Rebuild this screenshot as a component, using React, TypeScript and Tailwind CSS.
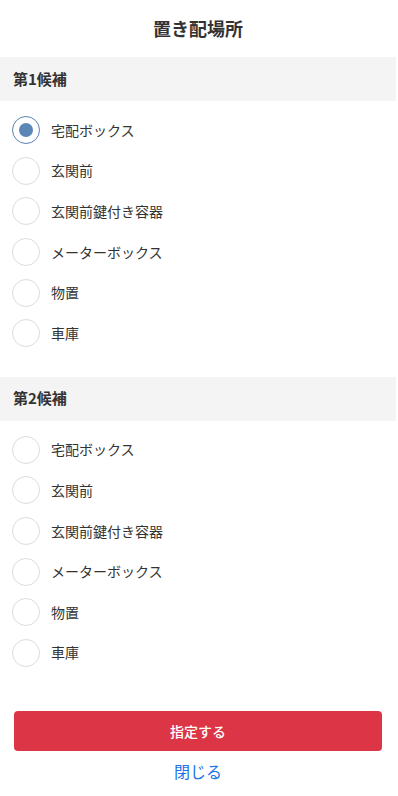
import { useState } from "react";

const places = ["宅配ボックス", "玄関前", "玄関前鍵付き容器", "メーターボックス", "物置", "車庫"];

function Radio({ checked }: { checked: boolean }) {
  return (
    <span className={`size-[28px] shrink-0 rounded-full border grid place-items-center bg-white ${checked ? "border-[#5b84b3]" : "border-[#dcdcdc]"}`}>
      {checked && <span className="size-[14px] rounded-full bg-[#5b87b6]" />}
    </span>
  );
}

function Section({ title, value, onChange }: { title: string; value: string | null; onChange: (v: string) => void }) {
  return (
    <section>
      <div className="h-[44px] bg-[#f4f4f4] px-[13px] flex items-center text-[15px] font-bold text-[#333]">{title}</div>
      <ul className="pt-[9px] px-[12px]">
        {places.map(p => (
          <li key={p}>
            <button onClick={() => onChange(p)} className="w-full h-[40.6px] flex items-center gap-[11px] text-left text-[14px] text-[#333]">
              <Radio checked={value === p} />
              <span>{p}</span>
            </button>
          </li>
        ))}
      </ul>
    </section>
  );
}

export default function App() {
  const [first, setFirst] = useState<string | null>("宅配ボックス");
  const [second, setSecond] = useState<string | null>(null);

  return (
    <div className="w-[396px] min-h-[796px] bg-white font-['Noto_Sans_CJK_JP','Noto_Sans',sans-serif]">
      <h1 className="h-[57px] flex items-center justify-center text-[18px] font-bold text-[#333]">置き配場所</h1>
      <Section title="第1候補" value={first} onChange={setFirst} />
      <div className="h-[23px]" />
      <Section title="第2候補" value={second} onChange={setSecond} />
      <div className="px-[14px] pt-[38px]">
        <button className="w-full h-[40px] rounded-[4px] bg-[#dc3545] text-white text-[14px] font-medium">指定する</button>
        <button className="w-full h-[40px] text-[16px] text-[#1a73e8]">閉じる</button>
      </div>
    </div>
  );
}
